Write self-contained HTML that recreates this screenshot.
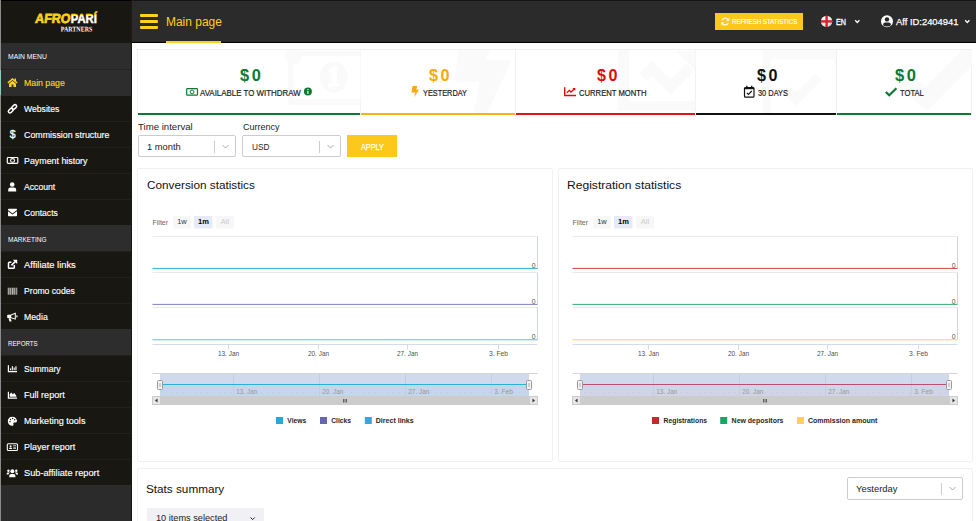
<!DOCTYPE html>
<html lang="en">
<head>
<meta charset="utf-8">
<title>Main page</title>
<style>
*{box-sizing:border-box;margin:0;padding:0}
html,body{width:976px;height:521px;overflow:hidden;background:#fff;font-family:"Liberation Sans",sans-serif;color:#222}
.abs{position:absolute}
.t{position:absolute;white-space:nowrap;transform-origin:0 0}
#side{position:absolute;left:0;top:0;width:132px;height:521px;background:#2b2b2b;border-left:1px solid #8c8c8c;border-right:1px solid #1a1915}
#logo{position:absolute;left:0;top:0;width:130px;height:43px;background:#181712;border-top:1px solid #000}
.sec{position:absolute;left:0;width:130px;height:26px;background:#2d2d2d}
.it{position:absolute;left:0;width:130px;height:26px;background:#181712;border-top:1px solid #23211d}
.it.act{background:#2d2d2d}
#top{position:absolute;left:132px;top:0;width:844px;height:43px;background:#2b2b2b;border-bottom:1px solid #000;border-top:1px solid #151515}
.card{position:absolute;background:#fff;border:1px solid #f1f1f1;border-radius:2px}
.stat{position:absolute;top:49px;height:66px;background:#fff;border-top:1px solid #f1f1f1;border-right:1px solid #f1f1f1;overflow:hidden}
.stat .b{position:absolute;left:0;right:0;bottom:0;height:2px}
.sel{position:absolute;height:22px;border:1px solid #ccc;border-radius:2px;background:#fff}
.sel i{position:absolute;right:20px;top:5px;width:1px;height:12px;background:#ccc}
.sel svg{position:absolute;right:6px;top:8px;width:7px;height:5px}
svg text{font-family:"Liberation Sans",sans-serif}
</style>
</head>
<body>
<div id="side">
 <div id="logo">
  <svg class="abs" style="left:-1px;top:0" width="131" height="43" viewBox="0 0 131 43">
   <defs><linearGradient id="pg" gradientUnits="userSpaceOnUse" x1="0" y1="0" x2="0" y2="43"><stop offset="0" stop-color="#ffd11a"/><stop offset="0.320" stop-color="#ffd11a"/><stop offset="0.320" stop-color="#fff"/><stop offset="1" stop-color="#fff"/></linearGradient></defs>
   <g transform="translate(34.700,22.400) skewX(-7)"><text x="0" y="0" font-size="13.200" font-weight="bold" fill="#ffd11a" stroke="#ffd11a" stroke-width="0.700" textLength="35.300" lengthAdjust="spacingAndGlyphs">AFRO</text></g>
   <text x="70.800" y="22.400" font-size="12.200" font-weight="bold" fill="url(#pg)" stroke="url(#pg)" stroke-width="0.500" textLength="26" lengthAdjust="spacingAndGlyphs">PARÍ</text>
   <text transform="translate(60.700,30.500) rotate(0.050)" x="0" y="0" font-size="7.200" font-weight="bold" fill="#fff" style="font-family:'Liberation Serif',serif" textLength="31.600" lengthAdjust="spacingAndGlyphs">PARTNERS</text>
  </svg>
 </div>
 <div class="sec" style="top:43px"></div>
 <div class="it act" style="top:69px;border-top:1px dotted #1c1c1c"></div>
 <div class="abs" style="left:-1px;top:70px;width:1px;height:25px;background:#8fcfb5"></div>
 <div class="it" style="top:95px;border-top-color:#2d2d2d"></div>
 <div class="it" style="top:121px"></div>
 <div class="it" style="top:147px"></div>
 <div class="it" style="top:173px"></div>
 <div class="it" style="top:199px"></div>
 <div class="sec" style="top:225px"></div>
 <div class="it" style="top:251px"></div>
 <div class="it" style="top:277px"></div>
 <div class="it" style="top:303px"></div>
 <div class="sec" style="top:329px"></div>
 <div class="it" style="top:355px"></div>
 <div class="it" style="top:381px"></div>
 <div class="it" style="top:407px"></div>
 <div class="it" style="top:433px"></div>
 <div class="it" style="top:459px"></div>
<svg class="abs" style="left:-1px;top:0" width="131" height="521" viewBox="0 0 131 521">
<g transform="translate(7.500,78)" fill="#ffd11a"><path d="M5 0.100L-0.100 4.300L0.800 5.400L5 2L9.200 5.400L10.100 4.300L8.500 3V0.600H7.100V1.800Z"/><path d="M5 2.800L1.500 5.700V8.900H4.100V6.400H5.900V8.900H8.500V5.700Z"/></g>
<g transform="translate(12.500,108.800) rotate(-45)" fill="none" stroke="#fff" stroke-width="1.500"><rect x="-5.200" y="-1.600" width="5.600" height="3.200" rx="1.600"/><rect x="-0.400" y="-1.600" width="5.600" height="3.200" rx="1.600"/></g>
<text x="12.600" y="138.400" font-size="10.500" fill="#fff" stroke="#fff" stroke-width="0.300" text-anchor="middle">$</text>
<g fill="none" stroke="#fff"><rect x="7.300" y="157.500" width="10.500" height="5.800" rx="0.800" stroke-width="1.200"/><ellipse cx="12.550" cy="160.400" rx="2" ry="1.800" stroke-width="1.100"/></g>
<g fill="#fff"><circle cx="12.200" cy="184.500" r="2.300"/><path d="M8.200 191.400V189.800Q8.200 187.400 10.600 187.400H13.800Q16.200 187.400 16.200 189.800V191.400Z"/></g>
<g fill="#fff"><path d="M8 209.500Q8 208.700 8.800 208.700H16.200Q17 208.700 17 209.500V210.100L12.500 213.400L8 210.100Z"/><path d="M8 211.200L12.500 214.500L17 211.200V215.400Q17 216.200 16.200 216.200H8.800Q8 216.200 8 215.400Z"/></g>
<g fill="none" stroke="#fff" stroke-width="1.500"><path d="M14.300 265V267.400Q14.300 268.300 13.400 268.300H9.400Q8.500 268.300 8.500 267.400V263.200Q8.500 262.300 9.400 262.300H11.400"/><path d="M11.400 265.400L15.800 261" stroke-width="1.700"/></g><path d="M12.800 259.700H17.200V264.100Z" fill="#fff"/>
<g fill="#fff" opacity="0.850"><rect x="7.8" y="287.700" width="0.9" height="7"/><rect x="9.3" y="287.700" width="0.5" height="7"/><rect x="10.3" y="287.700" width="0.9" height="7"/><rect x="11.8" y="287.700" width="1.0" height="7"/><rect x="13.3" y="287.700" width="0.5" height="7"/><rect x="14.3" y="287.700" width="0.9" height="7"/><rect x="15.8" y="287.700" width="0.5" height="7"/><rect x="16.5" y="287.700" width="0.7" height="7"/></g>
<g fill="#fff"><path d="M7.200 315.400Q7.200 314.800 7.800 314.800H10.300L15.800 312.400V319.800L10.300 318H7.800Q7.200 318 7.200 317.400Z"/><path d="M8.500 318.300H10.600L11.600 321.400H9.500Z"/><rect x="16.300" y="315.200" width="1.200" height="2.200" rx="0.600"/><path d="M11.200 315.500L14.800 314V318.400L11.200 317.300Z" fill="#1a1814"/></g>
<g fill="#fff"><path d="M7.800 365.200H9V371H17V372.200H7.800Z"/><rect x="10" y="368.400" width="1.100" height="1.900"/><rect x="11.800" y="366.200" width="1.100" height="4.100"/><rect x="13.600" y="367.500" width="1.100" height="2.800"/><rect x="15.400" y="366.200" width="1.100" height="4.100"/></g>
<g fill="#fff"><path d="M7.800 391.700H9V397.500H17V398.700H7.800Z"/><path d="M9.700 396.800V394.300L11.300 392.500L12.800 394.300L14.300 393L16.300 395.700V396.800Z"/></g>
<g><path d="M12.300 416.700C9.700 416.700 7.800 418.700 7.800 421.200C7.800 423.700 9.800 425.700 12.300 425.700C13.200 425.700 13.700 425 13.400 424.200C13 423.200 13.600 422.500 14.500 422.500H15.600C16.400 422.500 17 421.900 17 421.100C17 418.600 14.900 416.700 12.300 416.700Z" fill="#fff"/><g fill="#1a1814"><circle cx="10" cy="421.800" r="0.700"/><circle cx="10.500" cy="419.500" r="0.700"/><circle cx="12.600" cy="418.500" r="0.700"/><circle cx="14.700" cy="419.700" r="0.700"/></g></g>
<g><rect x="7.300" y="443.800" width="10.200" height="6.700" rx="1" fill="none" stroke="#fff" stroke-width="1.100"/><g fill="#fff"><circle cx="10.600" cy="446.200" r="1"/><path d="M9 448.900Q9 447.600 10.600 447.600Q12.200 447.600 12.200 448.900Z"/><rect x="13.200" y="445.400" width="2.800" height="0.700"/><rect x="13.200" y="446.800" width="2.800" height="0.700"/><rect x="13.200" y="448.200" width="2.800" height="0.700"/></g></g>
<g fill="#fff"><circle cx="12.350" cy="471.300" r="2"/><path d="M9.300 477.200V475.800Q9.300 474 11.100 474H13.600Q15.400 474 15.400 475.800V477.200Z"/><circle cx="8.400" cy="470.700" r="1.200"/><circle cx="16.300" cy="470.700" r="1.200"/><path d="M6.700 474.500V473.700Q6.700 472.600 7.800 472.600H9.400Q9.800 472.600 10 472.800Q8.600 473.500 8.500 474.500Z"/><path d="M18 474.500V473.700Q18 472.600 16.900 472.600H15.300Q14.900 472.600 14.700 472.800Q16.100 473.500 16.200 474.500Z"/></g>
</svg>
</div>

<div id="top">
 <div class="abs" style="left:8px;top:13px;width:18px;height:3px;background:#ffd11a;border-radius:1px"></div>
 <div class="abs" style="left:8px;top:19px;width:18px;height:3px;background:#ffd11a;border-radius:1px"></div>
 <div class="abs" style="left:8px;top:25px;width:18px;height:3px;background:#ffd11a;border-radius:1px"></div>
 <div class="abs" style="left:34px;top:40px;width:55px;height:2px;background:#ffd11a"></div>
 <div class="abs" style="left:583px;top:12px;width:88px;height:17px;background:#fdc81c"></div>
</div>

<!-- stat cards -->
<div class="stat" style="left:137px;width:224px;border-left:1px solid #f1f1f1"><div class="b" style="background:#0a7b33"></div></div>
<div class="stat" style="left:361px;width:155px"><div class="b" style="background:#f7b219"></div></div>
<div class="stat" style="left:516px;width:180px"><div class="b" style="background:#e01414"></div></div>
<div class="stat" style="left:696px;width:141px"><div class="b" style="background:#111"></div></div>
<div class="stat" style="left:837px;width:135px"><div class="b" style="background:#0a7b33"></div></div>

<svg class="abs" style="left:0;top:0" width="976" height="521" viewBox="0 0 976 521">
<defs><clipPath id="c1"><rect x="138" y="50" width="222.500" height="63"/></clipPath><clipPath id="c2"><rect x="361" y="50" width="154.500" height="63"/></clipPath><clipPath id="c3"><rect x="516" y="50" width="179.500" height="63"/></clipPath><clipPath id="c4"><rect x="696" y="50" width="140" height="63"/></clipPath><clipPath id="c5"><rect x="837" y="50" width="135" height="63"/></clipPath></defs>
<g clip-path="url(#c1)"><rect x="288" y="50.700" width="90" height="54.400" rx="3" fill="#fafafa"/><rect x="293.400" y="56" width="80" height="43" fill="#fff"/><circle cx="293.400" cy="56" r="9" fill="#fafafa"/><ellipse cx="333.800" cy="77.200" rx="14" ry="15.800" fill="#fafafa"/><path d="M329 70L334 66.300H337V83.500H339.300V87H328V83.500H331.500V72.500L329 73.500Z" fill="#fff"/></g>
<g clip-path="url(#c2)"><path d="M459.500 50H488.500Q490 50 489.600 51.500L485.700 60.100H509Q512 60.100 511 62.500L487.500 112Q487 113 486 113H475.500Q474 113 474.300 111.500L479.700 82.300H456.500Q454.500 82.300 454.800 80.500L458 51.500Q458.200 50 459.500 50Z" fill="#fafafa"/></g>
<g clip-path="url(#c3)"><path d="M618 49.400H629V101H696V110.500H620Q618 110.500 618 108.500Z" fill="#fafafa"/><path d="M643 77.500L652 68.500L670.500 87L690 67.500" fill="none" stroke="#fafafa" stroke-width="11" stroke-linejoin="miter"/><path d="M676 51H696V71Z" fill="#fafafa"/></g>
<g clip-path="url(#c4)"><rect x="762.800" y="49" width="80" height="70" fill="#fafafa"/><rect x="770.800" y="59.400" width="63.900" height="60" fill="#fff"/><path d="M786.500 89.500L796.400 99.300L818.500 76.500" fill="none" stroke="#fafafa" stroke-width="9"/></g>
<g clip-path="url(#c5)"><path d="M895 72L926.400 99L980 45" fill="none" stroke="#fafafa" stroke-width="18"/></g>
</svg>

<!-- filters -->
<div class="sel" style="left:138px;top:135px;width:98px"><i></i><svg viewBox="0 0 7 5"><path d="M0.500 1L3.500 4L6.500 1" fill="none" stroke="#aaa" stroke-width="1"/></svg></div>
<div class="sel" style="left:242px;top:135px;width:99px"><i></i><svg viewBox="0 0 7 5"><path d="M0.500 1L3.500 4L6.500 1" fill="none" stroke="#aaa" stroke-width="1"/></svg></div>
<div class="abs" style="left:347px;top:135px;width:50px;height:22px;background:#fdc81c"></div>

<!-- chart cards -->
<div class="card" style="left:137px;top:168px;width:416px;height:294px"></div>
<div class="card" style="left:558px;top:168px;width:415px;height:294px"></div>

<svg class="abs" style="left:0;top:0" width="976" height="521" viewBox="0 0 976 521">
<g transform="translate(0,0)">
<text x="152.5" y="225" font-size="7" fill="#666">Filter</text>
<rect x="173" y="216" width="18" height="12.500" rx="1" fill="#f7f7f7"/>
<text x="182" y="224.200" font-size="7.500" fill="#333" text-anchor="middle">1w</text>
<rect x="194" y="216" width="18.500" height="12.500" rx="1" fill="#e6ebf5"/>
<text x="203.500" y="224.200" font-size="7.500" font-weight="bold" fill="#000" text-anchor="middle">1m</text>
<rect x="216" y="216" width="18" height="12.500" rx="1" fill="#f7f7f7"/>
<text x="225" y="224.200" font-size="7.500" fill="#ccc" text-anchor="middle">All</text>
<path d="M152.500 236.5H537.500" stroke="#eaeaea" stroke-width="1" fill="none"/>
<path d="M537.500 236.5V268.4" stroke="#ccd6eb" stroke-width="1" fill="none"/>
<path d="M152.500 268.4H537.500" stroke="#2bb0d7" stroke-width="1" fill="none"/>
<text x="535.500" y="267.59999999999997" font-size="6.800" fill="#555" text-anchor="end">0</text>
<path d="M152.500 272.5H537.500" stroke="#eaeaea" stroke-width="1" fill="none"/>
<path d="M537.500 272.5V304.4" stroke="#ccd6eb" stroke-width="1" fill="none"/>
<path d="M152.500 304.4H537.500" stroke="#817fbf" stroke-width="1" fill="none"/>
<text x="535.500" y="303.59999999999997" font-size="6.800" fill="#555" text-anchor="end">0</text>
<path d="M152.500 307.5H537.500" stroke="#eaeaea" stroke-width="1" fill="none"/>
<path d="M537.500 307.5V339.8" stroke="#ccd6eb" stroke-width="1" fill="none"/>
<path d="M152.500 339.8H537.500" stroke="#6fb1e8" stroke-width="1" fill="none"/>
<text x="535.500" y="339.0" font-size="6.800" fill="#555" text-anchor="end">0</text>
<path d="M152.500 344.500H537.500" stroke="#d3dbef" stroke-width="1" fill="none"/>
<path d="M228.5 344.500V349.500" stroke="#d3dbef" stroke-width="1" fill="none"/>
<text x="218.0" y="355.800" font-size="7.500" fill="#505050" textLength="21" lengthAdjust="spacingAndGlyphs">13. Jan</text>
<path d="M318.5 344.500V349.500" stroke="#d3dbef" stroke-width="1" fill="none"/>
<text x="308.0" y="355.800" font-size="7.500" fill="#505050" textLength="21" lengthAdjust="spacingAndGlyphs">20. Jan</text>
<path d="M407.5 344.500V349.500" stroke="#d3dbef" stroke-width="1" fill="none"/>
<text x="397.0" y="355.800" font-size="7.500" fill="#505050" textLength="21" lengthAdjust="spacingAndGlyphs">27. Jan</text>
<path d="M498.5 344.500V349.500" stroke="#d3dbef" stroke-width="1" fill="none"/>
<text x="489.0" y="355.800" font-size="7.500" fill="#505050" textLength="19" lengthAdjust="spacingAndGlyphs">3. Feb</text>
<rect x="160" y="373.500" width="369" height="22.500" fill="rgba(102,133,194,0.3)"/>
<rect x="160" y="384.500" width="369" height="11.500" fill="rgba(43,176,215,0.08)"/>
<path d="M233.5 373.500V396" stroke="#c3cce4" stroke-width="1" fill="none"/>
<text x="236.3" y="394" font-size="7.500" fill="#999" textLength="21" lengthAdjust="spacingAndGlyphs">13. Jan</text>
<path d="M319.5 373.500V396" stroke="#c3cce4" stroke-width="1" fill="none"/>
<text x="322.3" y="394" font-size="7.500" fill="#999" textLength="21" lengthAdjust="spacingAndGlyphs">20. Jan</text>
<path d="M405.5 373.500V396" stroke="#c3cce4" stroke-width="1" fill="none"/>
<text x="408.3" y="394" font-size="7.500" fill="#999" textLength="21" lengthAdjust="spacingAndGlyphs">27. Jan</text>
<path d="M491.5 373.500V396" stroke="#c3cce4" stroke-width="1" fill="none"/>
<text x="494.3" y="394" font-size="7.500" fill="#999" textLength="18.5" lengthAdjust="spacingAndGlyphs">3. Feb</text>
<path d="M165 392.500H529" stroke="#aab8d6" stroke-width="1" stroke-dasharray="1 5" fill="none" opacity="0.450"/>
<path d="M160 384.500H529" stroke="#2bb0d7" stroke-width="1" fill="none"/>
<path d="M152.500 373.500H537.500" stroke="#d4d4d4" stroke-width="1" fill="none"/>
<rect x="157.5" y="380.500" width="5" height="9" rx="1" fill="#f2f2f2" stroke="#999" stroke-width="1"/>
<path d="M159.5 383V387M160.5 383V387" stroke="#aaa" stroke-width="0.500" fill="none"/>
<rect x="526.5" y="380.500" width="5" height="9" rx="1" fill="#f2f2f2" stroke="#999" stroke-width="1"/>
<path d="M528.5 383V387M529.5 383V387" stroke="#aaa" stroke-width="0.500" fill="none"/>
<rect x="152" y="396" width="386" height="9" fill="#ccc"/>
<rect x="152.500" y="396.500" width="8" height="8" fill="#e6e6e6" stroke="#ccc" stroke-width="1"/>
<rect x="529.500" y="396.500" width="8" height="8" fill="#e6e6e6" stroke="#ccc" stroke-width="1"/>
<path d="M157.500 398.500L155 400.500L157.500 402.500Z" fill="#333"/>
<path d="M532.500 398.500L535 400.500L532.500 402.500Z" fill="#333"/>
<path d="M343.500 399V402.500M345 399V402.500M346.500 399V402.500" stroke="#333" stroke-width="0.700" fill="none"/>
<rect x="276" y="417" width="7" height="7" fill="#2ca7d4"/>
<text x="287.3" y="423.300" font-size="7.500" font-weight="bold" fill="#262626" textLength="18.9" lengthAdjust="spacingAndGlyphs">Views</text>
<rect x="320" y="417" width="7" height="7" fill="#6a66ad"/>
<text x="331.3" y="423.300" font-size="7.500" font-weight="bold" fill="#262626" textLength="19.7" lengthAdjust="spacingAndGlyphs">Clicks</text>
<rect x="364.8" y="417" width="7" height="7" fill="#3ba5d5"/>
<text x="375.8" y="423.300" font-size="7.500" font-weight="bold" fill="#262626" textLength="37.9" lengthAdjust="spacingAndGlyphs">Direct links</text>
</g>
<g transform="translate(420,0)">
<text x="152.5" y="225" font-size="7" fill="#666">Filter</text>
<rect x="173" y="216" width="18" height="12.500" rx="1" fill="#f7f7f7"/>
<text x="182" y="224.200" font-size="7.500" fill="#333" text-anchor="middle">1w</text>
<rect x="194" y="216" width="18.500" height="12.500" rx="1" fill="#e6ebf5"/>
<text x="203.500" y="224.200" font-size="7.500" font-weight="bold" fill="#000" text-anchor="middle">1m</text>
<rect x="216" y="216" width="18" height="12.500" rx="1" fill="#f7f7f7"/>
<text x="225" y="224.200" font-size="7.500" fill="#ccc" text-anchor="middle">All</text>
<path d="M152.500 236.5H537.500" stroke="#eaeaea" stroke-width="1" fill="none"/>
<path d="M537.500 236.5V268.4" stroke="#ccd6eb" stroke-width="1" fill="none"/>
<path d="M152.500 268.4H537.500" stroke="#cc4847" stroke-width="1" fill="none"/>
<text x="535.500" y="267.59999999999997" font-size="6.800" fill="#555" text-anchor="end">0</text>
<path d="M152.500 272.5H537.500" stroke="#eaeaea" stroke-width="1" fill="none"/>
<path d="M537.500 272.5V304.4" stroke="#ccd6eb" stroke-width="1" fill="none"/>
<path d="M152.500 304.4H537.500" stroke="#36ad73" stroke-width="1" fill="none"/>
<text x="535.500" y="303.59999999999997" font-size="6.800" fill="#555" text-anchor="end">0</text>
<path d="M152.500 307.5H537.500" stroke="#eaeaea" stroke-width="1" fill="none"/>
<path d="M537.500 307.5V339.8" stroke="#ccd6eb" stroke-width="1" fill="none"/>
<path d="M152.500 339.8H537.500" stroke="#f7cf72" stroke-width="1" fill="none"/>
<text x="535.500" y="339.0" font-size="6.800" fill="#555" text-anchor="end">0</text>
<path d="M152.500 344.500H537.500" stroke="#d3dbef" stroke-width="1" fill="none"/>
<path d="M228.5 344.500V349.500" stroke="#d3dbef" stroke-width="1" fill="none"/>
<text x="218.0" y="355.800" font-size="7.500" fill="#505050" textLength="21" lengthAdjust="spacingAndGlyphs">13. Jan</text>
<path d="M318.5 344.500V349.500" stroke="#d3dbef" stroke-width="1" fill="none"/>
<text x="308.0" y="355.800" font-size="7.500" fill="#505050" textLength="21" lengthAdjust="spacingAndGlyphs">20. Jan</text>
<path d="M407.5 344.500V349.500" stroke="#d3dbef" stroke-width="1" fill="none"/>
<text x="397.0" y="355.800" font-size="7.500" fill="#505050" textLength="21" lengthAdjust="spacingAndGlyphs">27. Jan</text>
<path d="M498.5 344.500V349.500" stroke="#d3dbef" stroke-width="1" fill="none"/>
<text x="489.0" y="355.800" font-size="7.500" fill="#505050" textLength="19" lengthAdjust="spacingAndGlyphs">3. Feb</text>
<rect x="160" y="373.500" width="369" height="22.500" fill="rgba(102,133,194,0.3)"/>
<rect x="160" y="384.500" width="369" height="11.500" fill="rgba(200,64,64,0.04)"/>
<path d="M233.5 373.500V396" stroke="#c3cce4" stroke-width="1" fill="none"/>
<text x="236.3" y="394" font-size="7.500" fill="#999" textLength="21" lengthAdjust="spacingAndGlyphs">13. Jan</text>
<path d="M319.5 373.500V396" stroke="#c3cce4" stroke-width="1" fill="none"/>
<text x="322.3" y="394" font-size="7.500" fill="#999" textLength="21" lengthAdjust="spacingAndGlyphs">20. Jan</text>
<path d="M405.5 373.500V396" stroke="#c3cce4" stroke-width="1" fill="none"/>
<text x="408.3" y="394" font-size="7.500" fill="#999" textLength="21" lengthAdjust="spacingAndGlyphs">27. Jan</text>
<path d="M491.5 373.500V396" stroke="#c3cce4" stroke-width="1" fill="none"/>
<text x="494.3" y="394" font-size="7.500" fill="#999" textLength="18.5" lengthAdjust="spacingAndGlyphs">3. Feb</text>
<path d="M165 392.500H529" stroke="#aab8d6" stroke-width="1" stroke-dasharray="1 5" fill="none" opacity="0.450"/>
<path d="M160 384.500H529" stroke="#b85070" stroke-width="1" fill="none"/>
<path d="M152.500 373.500H537.500" stroke="#d4d4d4" stroke-width="1" fill="none"/>
<rect x="157.5" y="380.500" width="5" height="9" rx="1" fill="#f2f2f2" stroke="#999" stroke-width="1"/>
<path d="M159.5 383V387M160.5 383V387" stroke="#aaa" stroke-width="0.500" fill="none"/>
<rect x="526.5" y="380.500" width="5" height="9" rx="1" fill="#f2f2f2" stroke="#999" stroke-width="1"/>
<path d="M528.5 383V387M529.5 383V387" stroke="#aaa" stroke-width="0.500" fill="none"/>
<rect x="152" y="396" width="386" height="9" fill="#ccc"/>
<rect x="152.500" y="396.500" width="8" height="8" fill="#e6e6e6" stroke="#ccc" stroke-width="1"/>
<rect x="529.500" y="396.500" width="8" height="8" fill="#e6e6e6" stroke="#ccc" stroke-width="1"/>
<path d="M157.500 398.500L155 400.500L157.500 402.500Z" fill="#333"/>
<path d="M532.500 398.500L535 400.500L532.500 402.500Z" fill="#333"/>
<path d="M343.500 399V402.500M345 399V402.500M346.500 399V402.500" stroke="#333" stroke-width="0.700" fill="none"/>
<rect x="232" y="417" width="7" height="7" fill="#c02b2b"/>
<text x="243.5" y="423.300" font-size="7.500" font-weight="bold" fill="#262626" textLength="43.6" lengthAdjust="spacingAndGlyphs">Registrations</text>
<rect x="300.20000000000005" y="417" width="7" height="7" fill="#1ea366"/>
<text x="311.6" y="423.300" font-size="7.500" font-weight="bold" fill="#262626" textLength="51.9" lengthAdjust="spacingAndGlyphs">New depositors</text>
<rect x="377" y="417" width="7" height="7" fill="#fbd15b"/>
<text x="388" y="423.300" font-size="7.500" font-weight="bold" fill="#262626" textLength="69.4" lengthAdjust="spacingAndGlyphs">Commission amount</text>
</g>
</svg>

<!-- stats summary -->
<div class="card" style="left:137px;top:468px;width:836px;height:60px"></div>
<div class="abs" style="left:147px;top:508px;width:117px;height:20px;background:#f0f0f5"></div>
<div class="sel" style="left:847px;top:477px;width:116px;height:23px"><i></i><svg viewBox="0 0 7 5"><path d="M0.500 1L3.500 4L6.500 1" fill="none" stroke="#aaa" stroke-width="1"/></svg></div>

<div class="t" style="left:24.20px;top:78px;font-size:9.2px;line-height:11px;color:#ffd11a;transform:scaleX(0.9512);-webkit-text-stroke:0.15px #ffd11a;">Main page</div>
<div class="t" style="left:24.20px;top:104px;font-size:9.2px;line-height:11px;color:#fff;transform:scaleX(0.9395);-webkit-text-stroke:0.15px #fff;">Websites</div>
<div class="t" style="left:24.20px;top:130px;font-size:9.2px;line-height:11px;color:#fff;transform:scaleX(0.9618);-webkit-text-stroke:0.15px #fff;">Commission structure</div>
<div class="t" style="left:24.20px;top:156px;font-size:9.2px;line-height:11px;color:#fff;transform:scaleX(0.9636);-webkit-text-stroke:0.15px #fff;">Payment history</div>
<div class="t" style="left:24.20px;top:182px;font-size:9.2px;line-height:11px;color:#fff;transform:scaleX(0.9412);-webkit-text-stroke:0.15px #fff;">Account</div>
<div class="t" style="left:24.20px;top:208px;font-size:9.2px;line-height:11px;color:#fff;transform:scaleX(0.9324);-webkit-text-stroke:0.15px #fff;">Contacts</div>
<div class="t" style="left:24.20px;top:260px;font-size:9.2px;line-height:11px;color:#fff;transform:scaleX(1.0176);-webkit-text-stroke:0.15px #fff;">Affiliate links</div>
<div class="t" style="left:24.20px;top:286px;font-size:9.2px;line-height:11px;color:#fff;transform:scaleX(0.9389);-webkit-text-stroke:0.15px #fff;">Promo codes</div>
<div class="t" style="left:24.20px;top:312px;font-size:9.2px;line-height:11px;color:#fff;transform:scaleX(0.9480);-webkit-text-stroke:0.15px #fff;">Media</div>
<div class="t" style="left:24.20px;top:364px;font-size:9.2px;line-height:11px;color:#fff;transform:scaleX(0.9300);-webkit-text-stroke:0.15px #fff;">Summary</div>
<div class="t" style="left:24.20px;top:390px;font-size:9.2px;line-height:11px;color:#fff;transform:scaleX(0.9857);-webkit-text-stroke:0.15px #fff;">Full report</div>
<div class="t" style="left:24.20px;top:416px;font-size:9.2px;line-height:11px;color:#fff;transform:scaleX(0.9857);-webkit-text-stroke:0.15px #fff;">Marketing tools</div>
<div class="t" style="left:24.20px;top:442px;font-size:9.2px;line-height:11px;color:#fff;transform:scaleX(0.9736);-webkit-text-stroke:0.15px #fff;">Player report</div>
<div class="t" style="left:24.20px;top:468px;font-size:9.2px;line-height:11px;color:#fff;transform:scaleX(1.0040);-webkit-text-stroke:0.15px #fff;">Sub-affiliate report</div>
<div class="t" style="left:8.40px;top:53px;font-size:7px;line-height:8px;color:#fff;transform:scaleX(0.9700);">MAIN MENU</div>
<div class="t" style="left:8.40px;top:236px;font-size:7px;line-height:8px;color:#fff;transform:scaleX(0.9262);">MARKETING</div>
<div class="t" style="left:8.40px;top:340px;font-size:7px;line-height:8px;color:#fff;transform:scaleX(0.8794);">REPORTS</div>
<div class="t" style="left:165.50px;top:15px;font-size:12px;line-height:14px;color:#ffd11a;transform:scaleX(0.9964);">Main page</div>
<div class="t" style="left:731.80px;top:17px;font-size:7.6px;line-height:9px;color:#fff;transform:scaleX(0.8037);-webkit-text-stroke:0.2px #fff;">REFRESH STATISTICS</div>
<div class="t" style="left:835.90px;top:17px;font-size:9.2px;line-height:11px;color:#fff;transform:scaleX(0.7846);-webkit-text-stroke:0.35px #fff;">EN</div>
<div class="t" style="left:895.70px;top:16px;font-size:9.8px;line-height:12px;color:#fff;transform:scaleX(0.9585);-webkit-text-stroke:0.25px #fff;">Aff ID:2404941</div>
<div class="t" style="left:239.90px;top:65px;font-size:16.5px;line-height:20px;color:#0a7a30;font-weight:bold;transform:scaleX(0.9905);word-spacing:-2px;">$ 0</div>
<div class="t" style="left:429.30px;top:65px;font-size:16.5px;line-height:20px;color:#fca80a;font-weight:bold;transform:scaleX(0.9810);word-spacing:-2px;">$ 0</div>
<div class="t" style="left:596.50px;top:65px;font-size:16.5px;line-height:20px;color:#e00a0a;font-weight:bold;transform:scaleX(0.9762);word-spacing:-2px;">$ 0</div>
<div class="t" style="left:756.80px;top:65px;font-size:16.5px;line-height:20px;color:#111;font-weight:bold;transform:scaleX(0.9762);word-spacing:-2px;">$ 0</div>
<div class="t" style="left:895.10px;top:65px;font-size:16.5px;line-height:20px;color:#0a7a30;font-weight:bold;transform:scaleX(1.0000);word-spacing:-2px;">$ 0</div>
<div class="t" style="left:200.00px;top:88px;font-size:8.5px;line-height:10px;color:#1c1c24;transform:scaleX(0.9303);-webkit-text-stroke:0.2px #1c1c24;">AVAILABLE TO WITHDRAW</div>
<div class="t" style="left:423.00px;top:88px;font-size:8.5px;line-height:10px;color:#1c1c24;transform:scaleX(0.8647);-webkit-text-stroke:0.2px #1c1c24;">YESTERDAY</div>
<div class="t" style="left:578.60px;top:88px;font-size:8.5px;line-height:10px;color:#1c1c24;transform:scaleX(0.9013);-webkit-text-stroke:0.2px #1c1c24;">CURRENT MONTH</div>
<div class="t" style="left:757.70px;top:88px;font-size:8.5px;line-height:10px;color:#1c1c24;transform:scaleX(0.8714);-webkit-text-stroke:0.2px #1c1c24;">30 DAYS</div>
<div class="t" style="left:899.70px;top:88px;font-size:8.5px;line-height:10px;color:#1c1c24;transform:scaleX(0.8926);-webkit-text-stroke:0.2px #1c1c24;">TOTAL</div>
<div class="t" style="left:138.30px;top:122px;font-size:9.3px;line-height:11px;color:#1d1d1d;transform:scaleX(1.0340);">Time interval</div>
<div class="t" style="left:242.90px;top:122px;font-size:9.3px;line-height:11px;color:#1d1d1d;transform:scaleX(0.9684);">Currency</div>
<div class="t" style="left:147.40px;top:142px;font-size:9.3px;line-height:11px;color:#1d1d1d;transform:scaleX(1.0029);">1 month</div>
<div class="t" style="left:252.00px;top:142px;font-size:9.3px;line-height:11px;color:#1d1d1d;transform:scaleX(0.8850);">USD</div>
<div class="t" style="left:360.50px;top:142px;font-size:9px;line-height:11px;color:#fff;transform:scaleX(0.8071);-webkit-text-stroke:0.25px #fff;">APPLY</div>
<div class="t" style="left:146.50px;top:178px;font-size:11.7px;line-height:14px;color:#111;transform:scaleX(1.0065);">Conversion statistics</div>
<div class="t" style="left:566.50px;top:178px;font-size:11.7px;line-height:14px;color:#111;transform:scaleX(1.0342);">Registration statistics</div>
<div class="t" style="left:146.00px;top:482px;font-size:11.7px;line-height:14px;color:#111;transform:scaleX(1.0038);">Stats summary</div>
<div class="t" style="left:155.80px;top:513px;font-size:9.3px;line-height:11px;color:#1d1d1d;transform:scaleX(0.9877);">10 items selected</div>
<div class="t" style="left:856.40px;top:484px;font-size:9.3px;line-height:11px;color:#1d1d1d;transform:scaleX(1.0122);">Yesterday</div>
<svg class="abs" style="left:0;top:0" width="976" height="521" viewBox="0 0 976 521">
<g fill="none" stroke="#fff8e0" stroke-width="1.300"><path d="M722 20.600A3.300 3.300 0 0 1 728 19.800"/><path d="M728.400 22.600A3.300 3.300 0 0 1 722.400 23.400"/></g>
<path d="M729.300 17.800V20.900H726.200Z" fill="#fff8e0"/><path d="M721.100 25.400V22.300H724.200Z" fill="#fff8e0"/>
<defs><clipPath id="fc"><circle cx="826.600" cy="21.400" r="5.900"/></clipPath><radialGradient id="fg" cx="0.400" cy="0.350" r="0.700"><stop offset="0" stop-color="#fff"/><stop offset="0.700" stop-color="#e8e8e8"/><stop offset="1" stop-color="#b8b8b8"/></radialGradient></defs>
<circle cx="826.600" cy="21.400" r="6.200" fill="#1c1c1c"/><circle cx="826.600" cy="21.400" r="5.700" fill="url(#fg)"/><g clip-path="url(#fc)" fill="#d8232a"><rect x="825.400" y="15" width="2.400" height="13"/><rect x="820" y="20.200" width="13" height="2.400"/></g>
<path d="M855.200 20.300L857.300 22.500L859.400 20.300" fill="none" stroke="#fff" stroke-width="1.300"/>
<path d="M965.200 20.300L967.300 22.500L969.400 20.300" fill="none" stroke="#fff" stroke-width="1.300"/>
<circle cx="887" cy="21.300" r="6" fill="#fff"/><circle cx="887" cy="19.400" r="2.200" fill="#272727"/><path d="M883 25.200Q883 22.600 885 22.600H889Q891 22.600 891 25.200Q889.300 26.400 887 26.400Q884.700 26.400 883 25.200Z" fill="#272727"/>
<g fill="none" stroke="#0a7a30"><rect x="186.700" y="88.600" width="10.800" height="6.600" rx="0.800" stroke-width="1.200"/><ellipse cx="192.100" cy="91.900" rx="1.900" ry="1.900" stroke-width="1"/></g>
<circle cx="307.900" cy="91.600" r="4" fill="#0a7a30"/><rect x="307.300" y="91" width="1.200" height="2.800" fill="#fff"/><circle cx="307.900" cy="89.600" r="0.700" fill="#fff"/>
<path d="M412.600 86H417.200L416.300 89.600H419L414 97.600L415.300 92.600H411.400Z" fill="#fca80a"/>
<g fill="none" stroke="#e00a0a"><path d="M564.700 87.300V95.500H576" stroke-width="1.400"/><path d="M566.800 92.800L569.300 90.400L571 92L574 89.200" stroke-width="1.300"/></g><path d="M572.300 88H575.300V91Z" fill="#e00a0a"/>
<g fill="none" stroke="#111"><rect x="744.500" y="87.600" width="9.500" height="9.600" rx="1" stroke-width="1.200"/><path d="M746.800 85.800V88M751.700 85.800V88" stroke-width="1.300"/><path d="M746.800 92.800L748.500 94.400L751.800 91" stroke-width="1.100"/></g><rect x="744.500" y="87.600" width="9.500" height="1.600" fill="#111"/>
<path d="M885.800 92L889.200 95.300L896.400 88.200" fill="none" stroke="#0a7a30" stroke-width="2.200"/>
<path d="M250.500 517.500L252.600 519.600L254.700 517.500" fill="none" stroke="#222" stroke-width="1"/>
</svg>
</body>
</html>
